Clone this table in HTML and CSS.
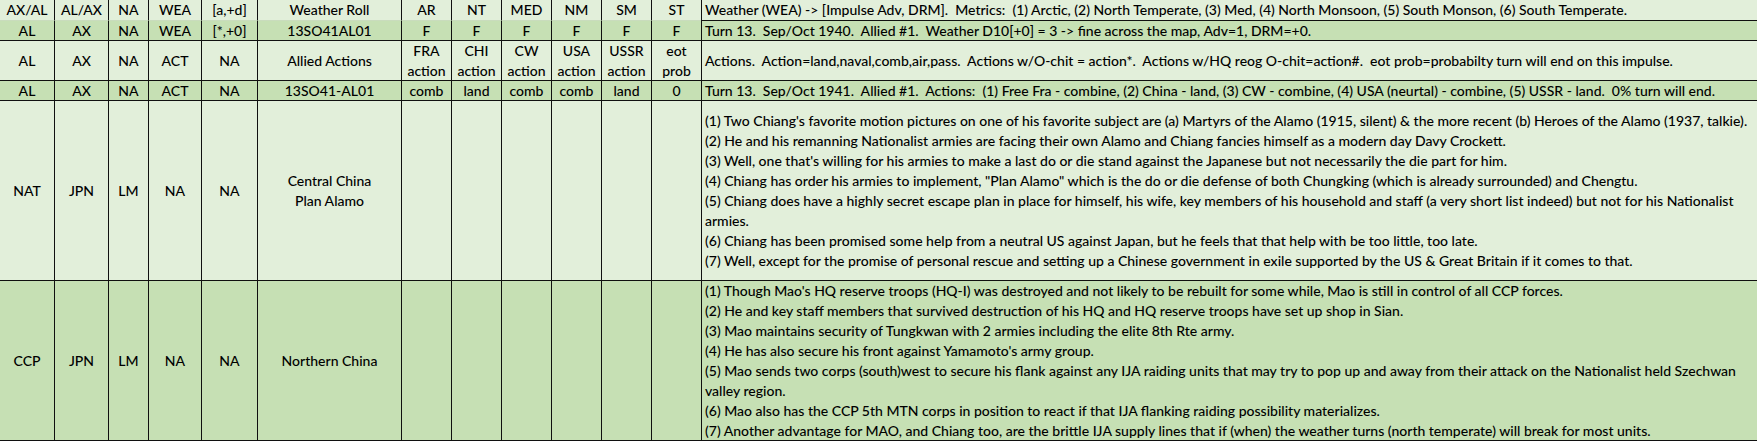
FILE: index.html
```html
<!DOCTYPE html>
<html lang="en">
<head>
<meta charset="utf-8">
<title>Turn 13 - Allied #1</title>
<link rel="stylesheet" href="styles.css">
</head>
<body>
<div class="sheet">
  <!-- header row -->
  <div class="c hd first">AX/AL</div>
  <div class="c hd">AL/AX</div>
  <div class="c hd">NA</div>
  <div class="c hd">WEA</div>
  <div class="c hd">[a,+d]</div>
  <div class="c hd">Weather Roll</div>
  <div class="c hd">AR</div>
  <div class="c hd">NT</div>
  <div class="c hd">MED</div>
  <div class="c hd">NM</div>
  <div class="c hd">SM</div>
  <div class="c hd">ST</div>
  <div class="c hd txt line-b"><span class="ln">Weather (WEA) -&gt; [Impulse Adv, DRM].  Metrics:  (1) Arctic, (2) North Temperate, (3) Med, (4) North Monsoon, (5) South Monson, (6) South Temperate.</span></div>

  <!-- weather result -->
  <div class="c dk line-b first">AL</div>
  <div class="c dk line-b">AX</div>
  <div class="c dk line-b">NA</div>
  <div class="c dk line-b">WEA</div>
  <div class="c dk line-b">[*,+0]</div>
  <div class="c dk line-b">13SO41AL01</div>
  <div class="c dk line-b">F</div>
  <div class="c dk line-b">F</div>
  <div class="c dk line-b">F</div>
  <div class="c dk line-b">F</div>
  <div class="c dk line-b">F</div>
  <div class="c dk line-b">F</div>
  <div class="c dk line-b txt"><span class="ln">Turn 13.  Sep/Oct 1940.  Allied #1.  Weather D10[+0] = 3 -&gt; fine across the map, Adv=1, DRM=+0.</span></div>

  <!-- actions header -->
  <div class="c lt line-b first">AL</div>
  <div class="c lt line-b">AX</div>
  <div class="c lt line-b">NA</div>
  <div class="c lt line-b">ACT</div>
  <div class="c lt line-b">NA</div>
  <div class="c lt line-b">Allied Actions</div>
  <div class="c lt line-b">FRA<br>action</div>
  <div class="c lt line-b">CHI<br>action</div>
  <div class="c lt line-b">CW<br>action</div>
  <div class="c lt line-b">USA<br>action</div>
  <div class="c lt line-b">USSR<br>action</div>
  <div class="c lt line-b">eot<br>prob</div>
  <div class="c lt line-b txt"><span class="ln">Actions.  Action=land,naval,comb,air,pass.  Actions w/O-chit = action*.  Actions w/HQ reog O-chit=action#.  eot prob=probabilty turn will end on this impulse.</span></div>

  <!-- actions result -->
  <div class="c dk line-b first">AL</div>
  <div class="c dk line-b">AX</div>
  <div class="c dk line-b">NA</div>
  <div class="c dk line-b">ACT</div>
  <div class="c dk line-b">NA</div>
  <div class="c dk line-b">13SO41-AL01</div>
  <div class="c dk line-b">comb</div>
  <div class="c dk line-b">land</div>
  <div class="c dk line-b">comb</div>
  <div class="c dk line-b">comb</div>
  <div class="c dk line-b">land</div>
  <div class="c dk line-b">0</div>
  <div class="c dk line-b txt"><span class="ln">Turn 13.  Sep/Oct 1941.  Allied #1.  Actions:  (1) Free Fra - combine, (2) China - land, (3) CW - combine, (4) USA (neurtal) - combine, (5) USSR - land.  0% turn will end.</span></div>

  <!-- NAT -->
  <div class="c lt line-b first">NAT</div>
  <div class="c lt line-b">JPN</div>
  <div class="c lt line-b">LM</div>
  <div class="c lt line-b">NA</div>
  <div class="c lt line-b">NA</div>
  <div class="c lt line-b">Central China<br>Plan Alamo</div>
  <div class="c lt line-b"></div>
  <div class="c lt line-b"></div>
  <div class="c lt line-b"></div>
  <div class="c lt line-b"></div>
  <div class="c lt line-b"></div>
  <div class="c lt line-b"></div>
  <div class="c lt line-b txt notes">
    <span class="ln">(1) Two Chiang's favorite motion pictures on one of his favorite subject are (a) Martyrs of the Alamo (1915, silent) &amp; the more recent (b) Heroes of the Alamo (1937, talkie).</span>
    <span class="ln">(2) He and his remanning Nationalist armies are facing their own Alamo and Chiang fancies himself as a modern day Davy Crockett.</span>
    <span class="ln">(3) Well, one that's willing for his armies to make a last do or die stand against the Japanese but not necessarily the die part for him.</span>
    <span class="ln">(4) Chiang has order his armies to implement, "Plan Alamo" which is the do or die defense of both Chungking (which is already surrounded) and Chengtu.</span>
    <span class="ln">(5) Chiang does have a highly secret escape plan in place for himself, his wife, key members of his household and staff (a very short list indeed) but not for his Nationalist</span>
    <span class="ln">armies.</span>
    <span class="ln">(6) Chiang has been promised some help from a neutral US against Japan, but he feels that that help with be too little, too late.</span>
    <span class="ln">(7) Well, except for the promise of personal rescue and setting up a Chinese government in exile supported by the US &amp; Great Britain if it comes to that.</span>
  </div>

  <!-- CCP -->
  <div class="c dk line-b first">CCP</div>
  <div class="c dk line-b">JPN</div>
  <div class="c dk line-b">LM</div>
  <div class="c dk line-b">NA</div>
  <div class="c dk line-b">NA</div>
  <div class="c dk line-b">Northern China</div>
  <div class="c dk line-b"></div>
  <div class="c dk line-b"></div>
  <div class="c dk line-b"></div>
  <div class="c dk line-b"></div>
  <div class="c dk line-b"></div>
  <div class="c dk line-b"></div>
  <div class="c dk line-b txt notes">
    <span class="ln">(1) Though Mao's HQ reserve troops (HQ-I) was destroyed and not likely to be rebuilt for some while, Mao is still in control of all CCP forces.</span>
    <span class="ln">(2) He and key staff members that survived destruction of his HQ and HQ reserve troops have set up shop in Sian.</span>
    <span class="ln">(3) Mao maintains security of Tungkwan with 2 armies including the elite 8th Rte army.</span>
    <span class="ln">(4) He has also secure his front against Yamamoto's army group.</span>
    <span class="ln">(5) Mao sends two corps (south)west to secure his flank against any IJA raiding units that may try to pop up and away from their attack on the Nationalist held Szechwan</span>
    <span class="ln">valley region.</span>
    <span class="ln">(6) Mao also has the CCP 5th MTN corps in position to react if that IJA flanking raiding possibility materializes.</span>
    <span class="ln">(7) Another advantage for MAO, and Chiang too, are the brittle IJA supply lines that if (when) the weather turns (north temperate) will break for most units.</span>
  </div>
</div>
</body>
</html>
```
FILE: styles.css
```css
html, body {
  margin: 0;
  padding: 0;
  overflow: hidden;
  background: #ffffff;
}

.sheet {
  display: grid;
  grid-template-columns: 54px 54px 40px 53px 56px 144px 50px 50px 50px 50px 50px 50px 1056px;
  grid-template-rows: 21px 20px 40px 20px 180px 160px;
  width: 1757px;
  font-family: Lato, "Liberation Sans", sans-serif;
  font-size: 14px;
  font-weight: 500;
  line-height: 20px;
  color: #000000;
}

.c {
  box-sizing: border-box;
  border-left: 1px solid #101010;
  display: flex;
  flex-direction: column;
  align-items: center;
  justify-content: center;
  text-align: center;
  overflow: hidden;
}

.c.first {
  border-left: none;
}

.hd {
  background: #e2efda;
  border-bottom: 1px solid #c9dcbd;
}

.lt {
  background: #e2efda;
}

.dk {
  background: #c6e0b4;
}

.line-b {
  border-bottom: 1px solid #101010;
}

.txt {
  align-items: flex-start;
  text-align: left;
  padding-left: 3px;
}

.ln {
  display: block;
  white-space: pre;
}
```
